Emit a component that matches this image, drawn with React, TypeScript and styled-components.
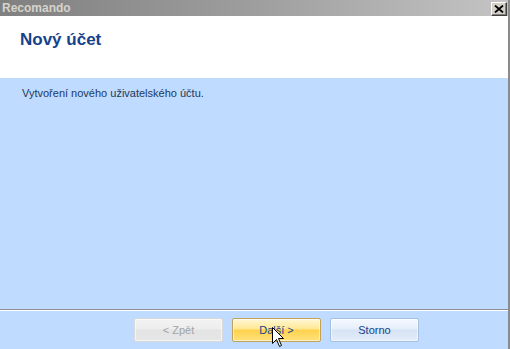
import React from "react";
import styled, { createGlobalStyle, css } from "styled-components";

const GlobalStyle = createGlobalStyle`
	html, body {
		margin: 0;
		padding: 0;
		background: #bfdbff;
	}
	#root {
		width: 510px;
		height: 349px;
		overflow: hidden;
	}
`;

const Window = styled.div`
	position: relative;
	width: 510px;
	height: 349px;
	display: flex;
	flex-direction: column;
	box-sizing: border-box;
	border-right: 2px solid #8b8b8b;
	font-family: "Liberation Sans", Arial, sans-serif;
	overflow: hidden;
`;

const TitleBar = styled.div`
	height: 16px;
	flex-shrink: 0;
	display: flex;
	align-items: center;
	justify-content: space-between;
	padding: 0 2px 0 2px;
	background: linear-gradient(to right, #808080 0%, #9e9e9e 50%, #c4c4c4 100%);
`;

const Title = styled.span`
	font-size: 12px;
	font-weight: bold;
	color: #d6d3cc;
	line-height: 16px;
`;

const CloseButton = styled.div`
	width: 16px;
	height: 14px;
	box-sizing: border-box;
	margin-top: 1px;
	margin-right: -1px;
	background: #d4d0c8;
	border-top: 1px solid #ffffff;
	border-left: 1px solid #ffffff;
	border-right: 1px solid #404040;
	border-bottom: 1px solid #404040;
	box-shadow: inset -1px -1px 0 #808080;
	display: flex;
	align-items: center;
	justify-content: center;
`;

const Header = styled.div`
	height: 62px;
	flex-shrink: 0;
	background: #ffffff;
	padding: 13px 0 0 20px;
	box-sizing: border-box;
`;

const Heading = styled.h1`
	margin: 0;
	font-size: 17px;
	font-weight: bold;
	line-height: 22px;
	color: #15428b;
`;

const Body = styled.div`
	flex: 1;
	background: #bfdbff;
	padding: 9px 22px 0 22px;
	border-bottom: 1px solid #8e8e8e;
	box-shadow: 0 1px 0 #ffffff;
`;

const Description = styled.p`
	margin: 0;
	font-size: 11px;
	line-height: 13px;
	color: #1e395b;
`;

const Footer = styled.div`
	height: 38px;
	flex-shrink: 0;
	margin-top: 1px;
	display: flex;
	gap: 9px;
	padding: 7px 0 0 134px;
	box-sizing: border-box;
	background: #bfdbff;
`;

type Variant = "disabled" | "active" | "normal";

const variants = {
	disabled: css`
		color: #a3a3a3;
		border-color: #d9d9d9;
		background: linear-gradient(to bottom, #f2f2f2 0%, #eeeeee 45%, #e4e4e4 50%, #e6e6e6 100%);
	`,
	active: css`
		color: #15428b;
		border-color: #c2a25c;
		background: linear-gradient(to bottom, #fff8d6 0%, #ffe793 45%, #ffd24f 50%, #ffe27a 100%);
	`,
	normal: css`
		color: #15428b;
		border-color: #a5bfe0;
		background: linear-gradient(to bottom, #f5f9ff 0%, #e6eefa 45%, #d6e3f5 50%, #e4edf9 100%);
	`,
};

const Button = styled.div<{ $variant: Variant }>`
	width: 89px;
	height: 24px;
	box-sizing: border-box;
	border: 1px solid;
	border-radius: 2px;
	display: flex;
	align-items: center;
	justify-content: center;
	font-size: 11px;
	box-shadow: inset 0 0 0 1px rgba(255, 255, 255, 0.55);
	${(p) => variants[p.$variant]}
`;

const Cursor = styled.svg`
	position: absolute;
	left: 272px;
	top: 327px;
`;

export default function App() {
	return (
		<>
			<GlobalStyle />
			<Window>
				<TitleBar>
					<Title>Recomando</Title>
					<CloseButton>
						<svg width="10" height="8" viewBox="0 0 10 8">
							<path d="M1 0.5 L9 7.5 M9 0.5 L1 7.5" stroke="#000" strokeWidth="1.8" />
						</svg>
					</CloseButton>
				</TitleBar>
				<Header>
					<Heading>Nový účet</Heading>
				</Header>
				<Body>
					<Description>Vytvoření nového uživatelského účtu.</Description>
				</Body>
				<Footer>
					<Button $variant="disabled">&lt; Zpět</Button>
					<Button $variant="active">Další &gt;</Button>
					<Button $variant="normal">Storno</Button>
				</Footer>
				<Cursor width="13" height="22" viewBox="0 0 13 22">
					<path
						d="M0.5 0.5 L0.5 16.5 L4.5 12.5 L7.5 19.5 L9.5 18.5 L6.5 11.5 L11.5 11.5 Z"
						fill="#ffffff"
						stroke="#000000"
						strokeWidth="1"
					/>
				</Cursor>
			</Window>
		</>
	);
}
